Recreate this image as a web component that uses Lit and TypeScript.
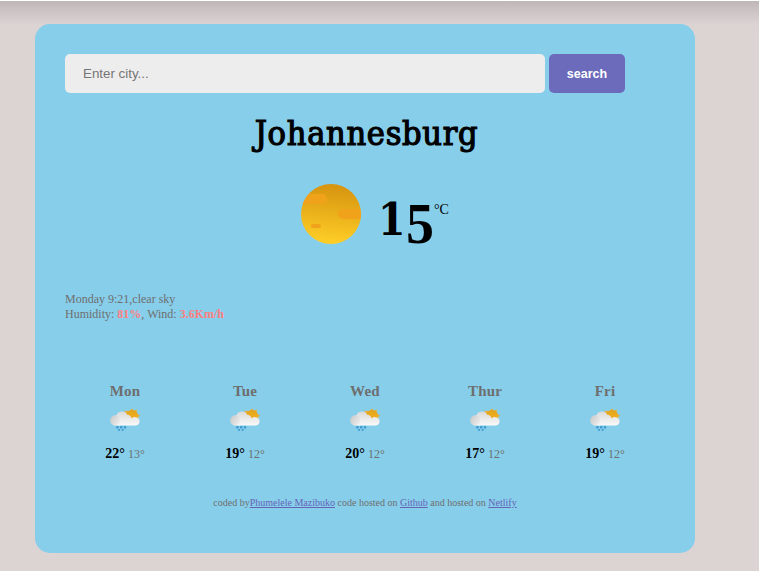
import { LitElement, html, css } from "lit";
import { customElement } from "lit/decorators.js";

@customElement("sun-icon")
class SunIcon extends LitElement {
  static styles = css`:host { display: block; width: 60px; height: 60px; } svg { display: block; }`;
  render() {
    return html`<svg width="60" height="60" viewBox="0 0 60 60">
      <defs>
        <linearGradient id="g" x1="0.55" y1="0" x2="0.45" y2="1">
          <stop offset="0" stop-color="#d6930f" /><stop offset="1" stop-color="#ffcf27" />
        </linearGradient>
        <clipPath id="c"><circle cx="30" cy="30" r="30" /></clipPath>
      </defs>
      <circle cx="30" cy="30" r="30" fill="url(#g)" />
      <g clip-path="url(#c)" fill="#f0a31a">
        <rect x="-10" y="10" width="36" height="10" rx="5" />
        <rect x="37" y="25" width="36" height="10" rx="5" />
        <rect x="10" y="40" width="10" height="4" rx="2" />
      </g>
    </svg>`;
  }
}

@customElement("rain-icon")
class RainIcon extends LitElement {
  static styles = css`:host { display: block; width: 34px; height: 24px; } svg { display: block; }`;
  render() {
    return html`<svg width="34" height="24" viewBox="0 0 34 24">
      <defs>
        <linearGradient id="s" x1="0" y1="0" x2="0" y2="1">
          <stop offset="0" stop-color="#e0a21b" /><stop offset="1" stop-color="#fbbb22" />
        </linearGradient>
        <linearGradient id="w" x1="0" y1="0" x2="0" y2="1">
          <stop offset="0" stop-color="#dadada" /><stop offset="1" stop-color="#f9f9f9" />
        </linearGradient>
        <linearGradient id="d" x1="0" y1="0" x2="1" y2="0.6">
          <stop offset="0" stop-color="#c8c8c8" /><stop offset="1" stop-color="#ebebeb" />
        </linearGradient>
      </defs>
      <path d="M24.2.6l1.4 1.8 3.4-.9-.5 2.7 2.1 2.7 2 .5-3 1.4H18l-1.6-6 4.6.2z" fill="#e5b03e" />
      <circle cx="24" cy="8.6" r="6.4" fill="url(#s)" />
      <path d="M7 17.5a5 5 0 0 1 0-9.8l1.4-.1a5.8 5.8 0 0 1 10.8-.9 5 5 0 0 1 4.4 3.6 5 5 0 0 1 4.4-1.1 4.2 4.2 0 0 1 0 8.3z" fill="url(#w)" />
      <path d="M7 17.5a5.1 5.1 0 1 1 5.4-5.1c0 2.8-2.4 5.1-5.4 5.1z" fill="url(#d)" />
      <g fill="#3e9bd0">
        <rect x="8.1" y="18" width="2.5" height="2.6" rx=".8" /><rect x="11.9" y="18" width="2.5" height="2.6" rx=".8" />
        <rect x="15.7" y="18" width="2.5" height="2.6" rx=".8" />
        <rect x="10" y="20.9" width="2.1" height="2" rx=".8" /><rect x="13.6" y="20.9" width="2.1" height="2" rx=".8" />
      </g>
    </svg>`;
  }
}

@customElement("app-root")
class AppRoot extends LitElement {
  static styles = css`
    :host {
      display: block; box-sizing: border-box; height: 571px; overflow: hidden;
      border-top: 1px solid #fff; padding: 23px 0 0 35px;
      background: linear-gradient(#bfb7b7, #cac2c2 8px, #dcd3d3 24px) #dcd3d3;
      font-family: "Liberation Serif", serif; color: #6e6e6e;
    }
    .card { box-sizing: border-box; width: 660px; height: 529px; padding: 30px; border-radius: 15px; background: #87ceeb; }
    form { display: flex; gap: 4px; height: 39px; }
    input, button { box-sizing: border-box; border: 0; border-radius: 5px; height: 39px; font-family: "Liberation Sans", sans-serif; font-size: 13.33px; }
    input { width: 480px; padding: 0 18px; background: #ededed; }
    input::placeholder { color: #757575; }
    button { width: 76px; padding: 0; background: #6c6bbb; color: #fff; font-weight: 700; font-size: 12.5px; }
    h1 {
      margin: 16px 0 0; padding-left: 3px; height: 48px; line-height: 48px; text-align: center; white-space: nowrap; color: #000;
      font-family: "DejaVu Serif Condensed", "DejaVu Serif", serif; font-stretch: condensed;
      font-weight: 400; font-size: 34px; letter-spacing: 0.7px; -webkit-text-stroke: 1.2px #000;
    }
    .now { display: flex; height: 60px; margin: 27px 0 0 236px; color: #000; }
    .temp { display: flex; margin-left: 17px; align-items: baseline; font-weight: 700; line-height: 60px; }
    .one { width: 28px; font: 700 44px/60px "DejaVu Serif Condensed", "DejaVu Serif", serif; font-stretch: condensed; position: relative; top: 2px; }
    .five { width: 28px; font-size: 56px; position: relative; top: 10px; }
    .unit { font-size: 14px; line-height: 16px; margin-top: 18px; }
    .info { margin-top: 48px; font-size: 12px; line-height: 15px; }
    .info b { color: #ff7f7f; }
    .days { display: grid; grid-template-columns: repeat(5, 120px); margin-top: 60px; }
    .day { display: flex; flex-direction: column; align-items: center; }
    .name { font-size: 15px; line-height: 18px; font-weight: 700; letter-spacing: 0.2px; }
    rain-icon { margin-top: 8px; }
    .range { margin-top: 14px; font-size: 12px; line-height: 16px; }
    .range b { color: #000; font-size: 14px; }
    footer { margin-top: 35px; font-size: 10px; line-height: 12px; text-align: center; }
    a { color: #6564b6; text-decoration: underline; }
  `;
  days = [["Mon", 22, 13], ["Tue", 19, 12], ["Wed", 20, 12], ["Thur", 17, 12], ["Fri", 19, 12]];
  render() {
    return html`<main class="card">
      <form><input placeholder="Enter city..." /><button type="button">search</button></form>
      <h1>Johannesburg</h1>
      <section class="now"><sun-icon></sun-icon>
        <div class="temp"><span class="one">1</span><span class="five">5</span></div><span class="unit">°C</span>
      </section>
      <section class="info"><div>Monday 9:21,clear sky</div><div>Humidity: <b>81%</b>, Wind: <b>3.6Km/h</b></div></section>
      <section class="days">${this.days.map(([n, hi, lo]) => html`<div class="day">
        <div class="name">${n}</div><rain-icon></rain-icon><div class="range"><b>${hi}°</b> ${lo}°</div></div>`)}</section>
      <footer>coded by<a>Phumelele Mazibuko</a> code hosted on <a>Github</a> and hosted on <a>Netlify</a></footer>
    </main>`;
  }
}
